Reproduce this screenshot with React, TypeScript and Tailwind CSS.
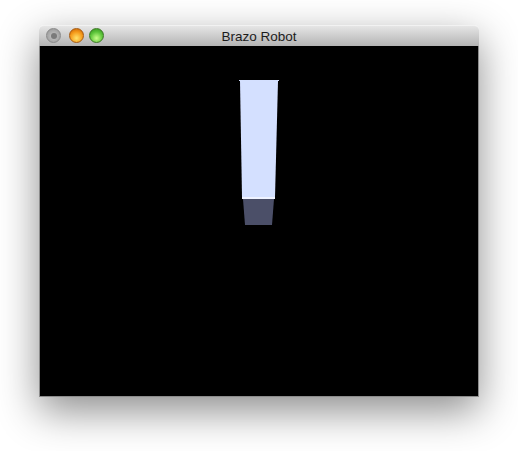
export default function App() {
  return (
    <div className="w-[518px] h-[451px] bg-white pt-[25px] pl-[39px] overflow-hidden">
      <div
        className="w-[440px] flex flex-col rounded-t-[5px] shadow-[0_14px_40px_rgba(0,0,0,0.45)]"
        style={{ fontFamily: '"Liberation Sans", "DejaVu Sans", sans-serif' }}
      >
        {/* Title bar */}
        <div className="h-[21px] relative flex items-center justify-center rounded-t-[5px] border-t border-[#f2f2f2] bg-gradient-to-b from-[#e6e6e6] to-[#b4b4b4]">
          <div className="absolute left-[7px] top-[2px] flex">
            <span className="w-[15px] h-[15px] rounded-full bg-[radial-gradient(circle_at_50%_55%,#c9c9c9,#8f8f8f)] border border-[#8a8a8a] flex items-center justify-center">
              <span className="w-[6px] h-[6px] rounded-full bg-[#7a7a7a]" />
            </span>
            <span className="ml-[8px] w-[15px] h-[15px] rounded-full bg-[radial-gradient(circle_at_50%_70%,#ffe36a,#f59a1a_55%,#c25a00)] border border-[#a65a10]" />
            <span className="ml-[5px] w-[15px] h-[15px] rounded-full bg-[radial-gradient(circle_at_50%_70%,#c8ff8a,#5cc43a_55%,#2f8a1a)] border border-[#3c7a24]" />
          </div>
          <span className="text-[13.5px] text-[#1c1c1c] leading-none mt-[1px]">Brazo Robot</span>
        </div>
        {/* Content */}
        <div className="h-[351px] bg-black border-x border-b border-[#8c8c8c]">
          <svg width="438" height="350" viewBox="0 0 438 350">
            <rect x="199" y="34" width="40" height="1" fill="#d4e0ff" />
            <polygon points="200,35 238,35 235,151 202,151" fill="#d4e0ff" />
            <rect x="202" y="151" width="33" height="2" fill="#eef2ff" />
            <polygon points="203,153 234,153 232,179 205,179" fill="#4b4f68" />
          </svg>
        </div>
      </div>
    </div>
  );
}
